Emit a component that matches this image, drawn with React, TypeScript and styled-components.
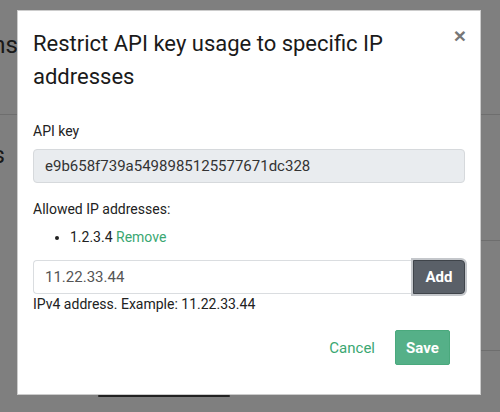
import React from "react";
import styled, { createGlobalStyle } from "styled-components";

const Global = createGlobalStyle`
  html, body { margin: 0; padding: 0; }
  body { font-family: Roboto, "Liberation Sans", sans-serif; color: #212529; }
`;

const Page = styled.div`
  position: relative;
  width: 500px;
  height: 412px;
  overflow: hidden;
  background: #fff;
`;

const BgText = styled.div<{ $top: number; $right: number }>`
  position: absolute;
  right: ${(p) => p.$right}px;
  top: ${(p) => p.$top}px;
  font-size: 24px;
  line-height: 30px;
  color: #333;
  white-space: nowrap;
`;

const BgLine = styled.div<{ $top: number; $left: number }>`
  position: absolute;
  left: ${(p) => p.$left}px;
  right: 0;
  top: ${(p) => p.$top}px;
  height: 1px;
  background: #ddd;
`;

const BgButton = styled.div`
  position: absolute;
  left: 98px;
  top: 395px;
  width: 132px;
  height: 2px;
  background: #444;
  border-radius: 2px;
`;

const Overlay = styled.div`
  position: absolute;
  inset: 0;
  background: rgba(0, 0, 0, 0.5);
`;

const Dialog = styled.div`
  position: absolute;
  left: 17px;
  top: 10px;
  width: 464px;
  height: 385px;
  background: #fff;
  border: 1px solid rgba(0, 0, 0, 0.2);
  box-sizing: border-box;
  display: flex;
  flex-direction: column;
`;

const Header = styled.div`
  display: flex;
  justify-content: space-between;
  align-items: flex-start;
  padding: 16px 14px 0 15px;
`;

const Title = styled.h5`
  margin: 0;
  font-size: 22px;
  font-weight: 400;
  line-height: 33px;
  color: #1a1a1a;
`;

const Close = styled.button`
  border: 0;
  background: none;
  padding: 0;
  margin-top: -2px;
  font-size: 21px;
  font-weight: 700;
  line-height: 1;
  color: #777;
  font-family: "Liberation Sans", sans-serif;
`;

const Body = styled.div`
  padding: 28px 15px 0 15px;
  display: flex;
  flex-direction: column;
`;

const Label = styled.div<{ $gap?: number }>`
  margin-top: ${(p) => p.$gap ?? 0}px;
  font-size: 14px;
  line-height: 20px;
  color: #222;
`;

const ReadOnly = styled.div`
  margin-top: 8px;
  height: 34px;
  box-sizing: border-box;
  border: 1px solid #d6d9dc;
  border-radius: 4px;
  background: #e9ecef;
  padding: 0 11px;
  display: flex;
  align-items: center;
  font-size: 15px;
  color: #333;
`;

const List = styled.ul`
  margin: 8px 0 0 0;
  padding-left: 37px;
  font-size: 14px;
  line-height: 20px;
  color: #222;
`;

const Link = styled.a`
  color: #3aa772;
  text-decoration: none;
`;

const InputRow = styled.div`
  margin-top: 13px;
  display: flex;
  height: 34px;
`;

const Input = styled.div`
  flex: 1;
  box-sizing: border-box;
  border: 1px solid #dadde0;
  border-right: 0;
  border-radius: 4px 0 0 4px;
  display: flex;
  align-items: center;
  padding: 0 11px;
  font-size: 15px;
  color: #555;
`;

const AddButton = styled.button`
  width: 52px;
  box-sizing: border-box;
  background: #5a6068;
  border: 1px solid #3f444a;
  box-shadow: 0 0 0 2px #c4c7cb;
  border-radius: 0 4px 4px 0;
  color: #fff;
  font-size: 15px;
  font-weight: 700;
  font-family: inherit;
  padding: 0;
`;

const Help = styled.div`
  margin-top: 1px;
  font-size: 14px;
  line-height: 18px;
  color: #222;
`;

const Footer = styled.div`
  display: flex;
  justify-content: flex-end;
  align-items: center;
  gap: 20px;
  padding: 17px 30px 0 0;
`;

const TextButton = styled.button`
  border: 0;
  background: none;
  padding: 0;
  font-size: 15px;
  font-family: inherit;
  color: #3aa772;
`;

const SaveButton = styled.button`
  height: 35px;
  width: 55px;
  border: 1px solid #4aa97d;
  border-radius: 2px;
  background: #55b088;
  color: #fff;
  font-size: 15px;
  font-weight: 700;
  font-family: inherit;
  padding: 0;
`;

export default function App() {
  return (
    <Page>
      <Global />
      <BgText $top={30} $right={482}>Permissions</BgText>
      <BgLine $top={114} $left={0} />
      <BgText $top={140} $right={495}>Keys</BgText>
      <BgLine $top={240} $left={300} />
      <BgLine $top={350} $left={300} />
      <BgButton />
      <Overlay />
      <Dialog>
        <Header>
          <Title>Restrict API key usage to specific IP addresses</Title>
          <Close>×</Close>
        </Header>
        <Body>
          <Label>API key</Label>
          <ReadOnly>e9b658f739a5498985125577671dc328</ReadOnly>
          <Label $gap={16}>Allowed IP addresses:</Label>
          <List>
            <li>
              1.2.3.4 <Link href="#">Remove</Link>
            </li>
          </List>
          <InputRow>
            <Input>11.22.33.44</Input>
            <AddButton>Add</AddButton>
          </InputRow>
          <Help>IPv4 address. Example: 11.22.33.44</Help>
        </Body>
        <Footer>
          <TextButton>Cancel</TextButton>
          <SaveButton>Save</SaveButton>
        </Footer>
      </Dialog>
    </Page>
  );
}
